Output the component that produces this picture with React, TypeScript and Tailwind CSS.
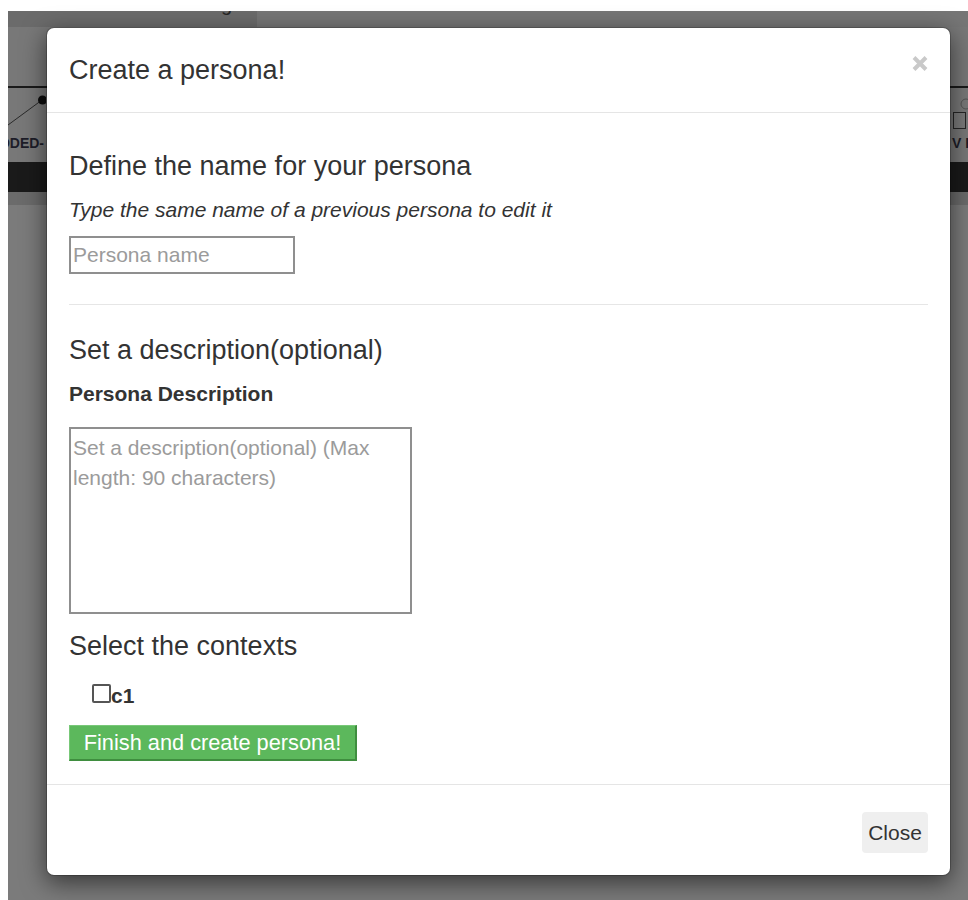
export default function App() {
  return (
    <div className="relative h-[900px] w-[968px] overflow-hidden bg-white font-['Liberation_Sans',Arial,sans-serif] text-[#333]">
      {/* page behind the dialog, dimmed by the backdrop */}
      <div className="ml-[8px] mt-[11px] flex h-[889px] flex-col bg-[#7b7b7b]">
        <div className="flex h-[16px] shrink-0">
          <div className="w-[249px] overflow-hidden bg-[#6b6b6b]">
            <div className="-mt-[17px] pl-[213px] text-[20px] leading-[20px] text-[#262626]">g</div>
          </div>
          <div className="flex-1 bg-[#767676]" />
        </div>
        <div className="h-[59px] shrink-0 bg-[#787878]" />
        <div className="h-[2px] shrink-0 bg-[#1a1a1a]" />
        <div className="flex h-[74px] shrink-0 bg-[#787878]">
          <div className="flex w-[38px] flex-col">
            <svg width="38" height="47" viewBox="0 0 38 47">
              <line x1="0" y1="37" x2="34" y2="12" stroke="#2a2a2a" strokeWidth="1" />
              <circle cx="34.5" cy="12" r="4.5" fill="#0d0d0d" />
            </svg>
            <div className="flex justify-end overflow-hidden whitespace-nowrap pr-[2px] text-[14px] font-bold leading-[16px] text-[#1d1d28]">
              ADDED-
            </div>
          </div>
          <div className="flex-1" />
          <div className="flex w-[17px] flex-col">
            <svg width="17" height="47" viewBox="0 0 17 47">
              <circle cx="15" cy="16" r="5" fill="none" stroke="#555" strokeWidth="1" />
              <rect x="2.5" y="24.5" width="12" height="16" fill="#7a7a7a" stroke="#262626" strokeWidth="1" />
            </svg>
            <div className="overflow-hidden whitespace-nowrap pl-[1px] text-[14px] font-bold leading-[16px] text-[#1d1d28]">
              V R
            </div>
          </div>
        </div>
        <div className="h-[30px] shrink-0 bg-[#1a1a1a]" />
        <div className="h-[13px] shrink-0 bg-[#6b6b6b]" />
        <div className="flex-1 bg-[#7b7b7b]" />
      </div>

      {/* dialog */}
      <div className="absolute left-[46px] top-[27px] w-[905px] rounded-[8px] border border-black/20 bg-white bg-clip-padding shadow-[0_7px_24px_rgba(0,0,0,0.55)]">
        <div className="flex items-start justify-between border-b border-[#e5e5e5] px-[22px] pb-[22px] pt-[23px]">
          <h4 className="text-[27px] leading-[39px]">Create a persona!</h4>
          <svg className="mt-[4px]" width="16" height="17" viewBox="0 0 16 17">
            <path d="M2 2.5L14 14.5M14 2.5L2 14.5" stroke="#c9c9c9" strokeWidth="4" />
          </svg>
        </div>

        <div className="flex flex-col items-start px-[22px] pb-[23px] pt-[22px]">
          <h4 className="mt-[16px] text-[27px] leading-[30px]">Define the name for your persona</h4>
          <p className="mt-[14px] text-[21px] italic leading-[30px]">Type the same name of a previous persona to edit it</p>
          <input
            type="text"
            placeholder="Persona name"
            className="mt-[11px] h-[38px] w-[226px] border-2 border-[#8f8f8f] px-[2px] text-[21px] outline-none placeholder:text-[#9b9b9b]"
          />
          <hr className="mt-[30px] w-full border-0 border-t border-[#e6e6e6]" />
          <h4 className="mt-[30px] text-[27px] leading-[30px]">Set a description(optional)</h4>
          <label className="mt-[14px] text-[21px] font-bold leading-[30px]">Persona Description</label>
          <textarea
            placeholder="Set a description(optional) (Max length: 90 characters)"
            className="mt-[18px] h-[187px] w-[343px] resize-none border-2 border-[#8f8f8f] px-[2px] pt-[4px] text-[21px] leading-[30px] outline-none placeholder:text-[#9b9b9b]"
          />
          <h4 className="mt-[17px] text-[27px] leading-[30px]">Select the contexts</h4>
          <label className="mt-[20px] flex h-[30px] items-start pl-[23px] text-[21px] font-bold leading-[30px]">
            <span className="mt-[3px] h-[19px] w-[19px] rounded-[2px] border-2 border-[#555] bg-white" />
            <span>c1</span>
          </label>
          <button className="mt-[14px] flex h-[36px] w-[288px] items-center justify-center border-b-2 border-l border-r-2 border-t border-b-[#3f8e3f] border-l-[#78c878] border-r-[#3f8e3f] border-t-[#78c878] bg-[#5cb85c] text-[21.75px] leading-[30px] text-white">
            Finish and create persona!
          </button>
        </div>

        <div className="flex justify-end border-t border-[#e5e5e5] px-[22px] pb-[22px] pt-[27px]">
          <button className="flex h-[41px] w-[66px] items-center justify-center rounded-[4px] bg-[#efefef] text-[21px] text-[#333]">
            Close
          </button>
        </div>
      </div>
    </div>
  );
}
